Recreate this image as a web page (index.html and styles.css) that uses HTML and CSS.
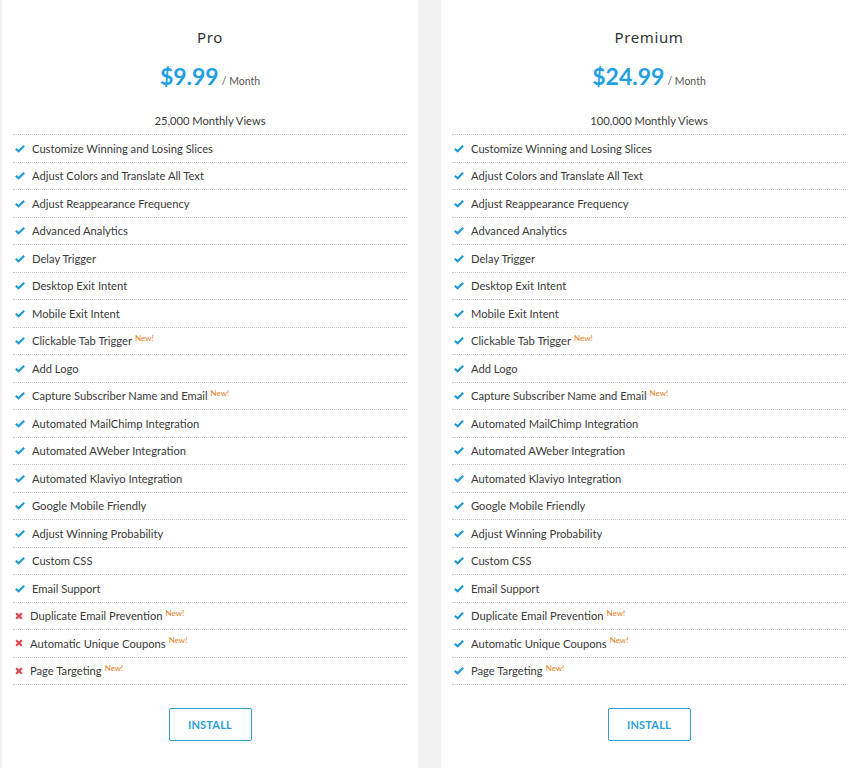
FILE: index.html
```html
<!DOCTYPE html>
<html>
<head>
<meta charset="utf-8">
<link rel="stylesheet" href="styles.css">
</head>
<body>
<div class="plans">
  <section class="card">
    <h2 class="title">Pro</h2>
    <div class="price"><span class="amount">$9.99</span><span class="per">/ Month</span></div>
    <div class="views">25,000 Monthly Views</div>
    <ul class="features">
      <li><svg class="ic check" viewBox="0 0 12 10"><path d="M1 5.2 L4.3 8.4 L11 1.6" /></svg>Customize Winning and Losing Slices</li>
      <li><svg class="ic check" viewBox="0 0 12 10"><path d="M1 5.2 L4.3 8.4 L11 1.6" /></svg>Adjust Colors and Translate All Text</li>
      <li><svg class="ic check" viewBox="0 0 12 10"><path d="M1 5.2 L4.3 8.4 L11 1.6" /></svg>Adjust Reappearance Frequency</li>
      <li><svg class="ic check" viewBox="0 0 12 10"><path d="M1 5.2 L4.3 8.4 L11 1.6" /></svg>Advanced Analytics</li>
      <li><svg class="ic check" viewBox="0 0 12 10"><path d="M1 5.2 L4.3 8.4 L11 1.6" /></svg>Delay Trigger</li>
      <li><svg class="ic check" viewBox="0 0 12 10"><path d="M1 5.2 L4.3 8.4 L11 1.6" /></svg>Desktop Exit Intent</li>
      <li><svg class="ic check" viewBox="0 0 12 10"><path d="M1 5.2 L4.3 8.4 L11 1.6" /></svg>Mobile Exit Intent</li>
      <li><svg class="ic check" viewBox="0 0 12 10"><path d="M1 5.2 L4.3 8.4 L11 1.6" /></svg>Clickable Tab Trigger<sup class="new">New!</sup></li>
      <li><svg class="ic check" viewBox="0 0 12 10"><path d="M1 5.2 L4.3 8.4 L11 1.6" /></svg>Add Logo</li>
      <li><svg class="ic check" viewBox="0 0 12 10"><path d="M1 5.2 L4.3 8.4 L11 1.6" /></svg>Capture Subscriber Name and Email<sup class="new">New!</sup></li>
      <li><svg class="ic check" viewBox="0 0 12 10"><path d="M1 5.2 L4.3 8.4 L11 1.6" /></svg>Automated MailChimp Integration</li>
      <li><svg class="ic check" viewBox="0 0 12 10"><path d="M1 5.2 L4.3 8.4 L11 1.6" /></svg>Automated AWeber Integration</li>
      <li><svg class="ic check" viewBox="0 0 12 10"><path d="M1 5.2 L4.3 8.4 L11 1.6" /></svg>Automated Klaviyo Integration</li>
      <li><svg class="ic check" viewBox="0 0 12 10"><path d="M1 5.2 L4.3 8.4 L11 1.6" /></svg>Google Mobile Friendly</li>
      <li><svg class="ic check" viewBox="0 0 12 10"><path d="M1 5.2 L4.3 8.4 L11 1.6" /></svg>Adjust Winning Probability</li>
      <li><svg class="ic check" viewBox="0 0 12 10"><path d="M1 5.2 L4.3 8.4 L11 1.6" /></svg>Custom CSS</li>
      <li><svg class="ic check" viewBox="0 0 12 10"><path d="M1 5.2 L4.3 8.4 L11 1.6" /></svg>Email Support</li>
      <li class="no"><svg class="ic cross" viewBox="0 0 10 10"><path d="M1.5 1.5 L8.5 8.5 M8.5 1.5 L1.5 8.5" /></svg>Duplicate Email Prevention<sup class="new">New!</sup></li>
      <li class="no"><svg class="ic cross" viewBox="0 0 10 10"><path d="M1.5 1.5 L8.5 8.5 M8.5 1.5 L1.5 8.5" /></svg>Automatic Unique Coupons<sup class="new">New!</sup></li>
      <li class="no"><svg class="ic cross" viewBox="0 0 10 10"><path d="M1.5 1.5 L8.5 8.5 M8.5 1.5 L1.5 8.5" /></svg>Page Targeting<sup class="new">New!</sup></li>
    </ul>
    <div class="action"><a class="btn" href="#">INSTALL</a></div>
  </section>
  <section class="card">
    <h2 class="title">Premium</h2>
    <div class="price"><span class="amount">$24.99</span><span class="per">/ Month</span></div>
    <div class="views">100,000 Monthly Views</div>
    <ul class="features">
      <li><svg class="ic check" viewBox="0 0 12 10"><path d="M1 5.2 L4.3 8.4 L11 1.6" /></svg>Customize Winning and Losing Slices</li>
      <li><svg class="ic check" viewBox="0 0 12 10"><path d="M1 5.2 L4.3 8.4 L11 1.6" /></svg>Adjust Colors and Translate All Text</li>
      <li><svg class="ic check" viewBox="0 0 12 10"><path d="M1 5.2 L4.3 8.4 L11 1.6" /></svg>Adjust Reappearance Frequency</li>
      <li><svg class="ic check" viewBox="0 0 12 10"><path d="M1 5.2 L4.3 8.4 L11 1.6" /></svg>Advanced Analytics</li>
      <li><svg class="ic check" viewBox="0 0 12 10"><path d="M1 5.2 L4.3 8.4 L11 1.6" /></svg>Delay Trigger</li>
      <li><svg class="ic check" viewBox="0 0 12 10"><path d="M1 5.2 L4.3 8.4 L11 1.6" /></svg>Desktop Exit Intent</li>
      <li><svg class="ic check" viewBox="0 0 12 10"><path d="M1 5.2 L4.3 8.4 L11 1.6" /></svg>Mobile Exit Intent</li>
      <li><svg class="ic check" viewBox="0 0 12 10"><path d="M1 5.2 L4.3 8.4 L11 1.6" /></svg>Clickable Tab Trigger<sup class="new">New!</sup></li>
      <li><svg class="ic check" viewBox="0 0 12 10"><path d="M1 5.2 L4.3 8.4 L11 1.6" /></svg>Add Logo</li>
      <li><svg class="ic check" viewBox="0 0 12 10"><path d="M1 5.2 L4.3 8.4 L11 1.6" /></svg>Capture Subscriber Name and Email<sup class="new">New!</sup></li>
      <li><svg class="ic check" viewBox="0 0 12 10"><path d="M1 5.2 L4.3 8.4 L11 1.6" /></svg>Automated MailChimp Integration</li>
      <li><svg class="ic check" viewBox="0 0 12 10"><path d="M1 5.2 L4.3 8.4 L11 1.6" /></svg>Automated AWeber Integration</li>
      <li><svg class="ic check" viewBox="0 0 12 10"><path d="M1 5.2 L4.3 8.4 L11 1.6" /></svg>Automated Klaviyo Integration</li>
      <li><svg class="ic check" viewBox="0 0 12 10"><path d="M1 5.2 L4.3 8.4 L11 1.6" /></svg>Google Mobile Friendly</li>
      <li><svg class="ic check" viewBox="0 0 12 10"><path d="M1 5.2 L4.3 8.4 L11 1.6" /></svg>Adjust Winning Probability</li>
      <li><svg class="ic check" viewBox="0 0 12 10"><path d="M1 5.2 L4.3 8.4 L11 1.6" /></svg>Custom CSS</li>
      <li><svg class="ic check" viewBox="0 0 12 10"><path d="M1 5.2 L4.3 8.4 L11 1.6" /></svg>Email Support</li>
      <li><svg class="ic check" viewBox="0 0 12 10"><path d="M1 5.2 L4.3 8.4 L11 1.6" /></svg>Duplicate Email Prevention<sup class="new">New!</sup></li>
      <li><svg class="ic check" viewBox="0 0 12 10"><path d="M1 5.2 L4.3 8.4 L11 1.6" /></svg>Automatic Unique Coupons<sup class="new">New!</sup></li>
      <li><svg class="ic check" viewBox="0 0 12 10"><path d="M1 5.2 L4.3 8.4 L11 1.6" /></svg>Page Targeting<sup class="new">New!</sup></li>
    </ul>
    <div class="action"><a class="btn" href="#">INSTALL</a></div>
  </section>
</div>
</body>
</html>
```

FILE: styles.css
```css
html, body {
  margin: 0;
  padding: 0;
}
body {
  background: #f2f2f2;
  font-family: Lato, "Open Sans", sans-serif;
  color: #3a3a3a;
  overflow: hidden;
  width: 855px;
  height: 768px;
}
.plans {
  display: grid;
  grid-template-columns: 416px 416px;
  column-gap: 23px;
  padding-left: 2px;
}
.card {
  background: #fff;
  padding: 27px 11px 0;
  height: 741px;
}
.title {
  margin: 0;
  text-align: center;
  font-family: "Noto Sans", sans-serif;
  font-weight: 400;
  font-size: 15px;
  line-height: 20px;
  letter-spacing: 0.6px;
  color: #333;
}
.price {
  margin-top: 14px;
  height: 30px;
  display: flex;
  justify-content: center;
  align-items: baseline;
  gap: 3px;
}
.amount {
  font-size: 23px;
  line-height: 30px;
  font-weight: 700;
  color: #1fa0e0;
}
.per {
  font-size: 10.5px;
  color: #555;
}
.views {
  margin-top: 22px;
  text-align: center;
  font-size: 11.2px;
  line-height: 16px;
  padding-bottom: 5px;
  border-bottom: 1px dotted #c8c8c8;
}
.features {
  list-style: none;
  margin: 0;
  padding: 0;
}
.features li {
  height: 26.5px;
  border-bottom: 1px dotted #c8c8c8;
  display: flex;
  align-items: center;
  font-size: 11.2px;
  padding-left: 2px;
}
.ic {
  width: 10px;
  height: 9px;
  margin-right: 7px;
  flex: none;
  fill: none;
}
.check path {
  stroke: #1f9ad6;
  stroke-width: 2.6;
}
.cross {
  width: 8px;
  height: 8px;
  margin: 0 7px 0 0;
}
.cross path {
  stroke: #e0474c;
  stroke-width: 2.8;
}
.new {
  font-size: 8px;
  color: #e67e22;
  margin-left: 3px;
  align-self: flex-start;
  margin-top: 5px;
}
.action {
  margin-top: 23px;
  display: flex;
  justify-content: center;
}
.btn {
  display: flex;
  align-items: center;
  justify-content: center;
  width: 83px;
  height: 33px;
  box-sizing: border-box;
  border: 1px solid #2a9fd6;
  border-radius: 2px;
  color: #2a9fd6;
  font-size: 11px;
  font-weight: 700;
  text-decoration: none;
  letter-spacing: 0.2px;
}
```
